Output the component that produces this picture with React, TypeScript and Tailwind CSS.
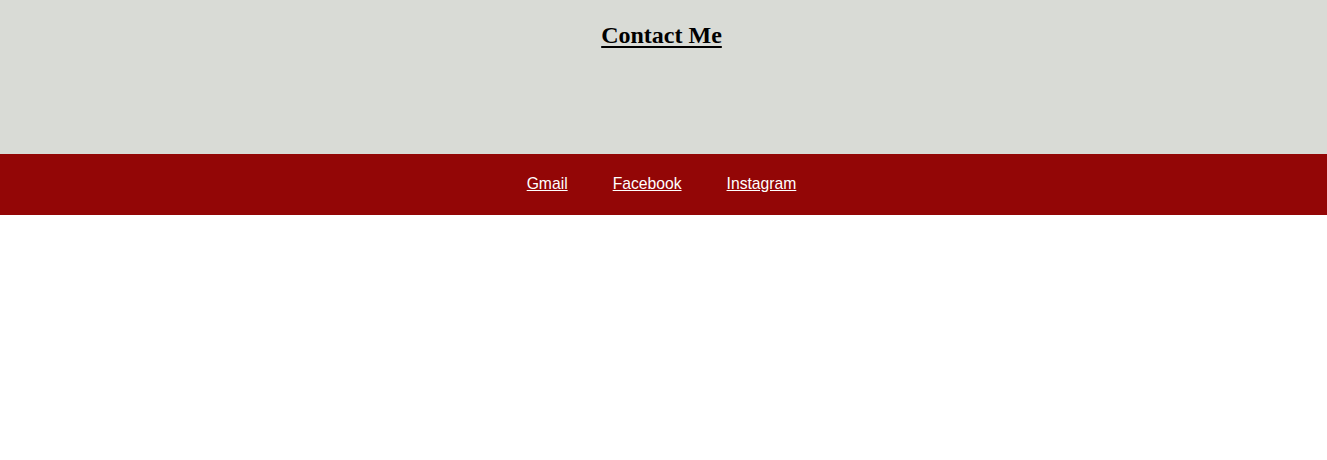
export default function App() {
  return (
    <div className="min-h-[460px] bg-white">
      <header className="h-[154px] bg-[#d9dbd6] pt-[22px] text-center">
        <h2 className="pr-[4px] font-['Liberation_Serif',serif] text-[24px] font-bold leading-[27px] text-black underline underline-offset-[3px]">
          Contact Me
        </h2>
      </header>
      <nav className="flex h-[61px] items-center justify-center gap-[45px] bg-[#930606] pr-[4px] pb-[2px] font-['Liberation_Sans',sans-serif] text-[15.7px] text-white">
        <a href="#" className="underline">Gmail</a>
        <a href="#" className="underline">Facebook</a>
        <a href="#" className="underline">Instagram</a>
      </nav>
    </div>
  );
}
